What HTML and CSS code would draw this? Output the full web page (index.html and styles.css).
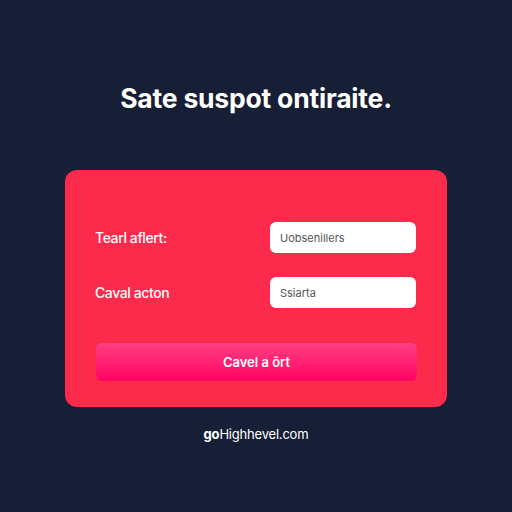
FILE: index.html
```html
<!DOCTYPE html>
<html lang="en">
<head>
    <meta charset="UTF-8">
    <meta name="viewport" content="width=device-width, initial-scale=1.0">
    <title>Sate suspot</title>
    <link rel="stylesheet" href="styles.css">
</head>
<body>
    <div class="page">
        <h1 class="title">Sate suspot ontiraite.</h1>

        <div class="card">
            <div class="row">
                <label for="alert-field">Tearl aflert:</label>
                <input type="text" id="alert-field" placeholder="Uobsenillers">
            </div>
            <div class="row">
                <label for="action-field">Caval acton</label>
                <input type="text" id="action-field" placeholder="Ssiarta">
            </div>
            <button class="submit">Cavel a ôrt</button>
        </div>

        <p class="footer"><b>go</b>Highhevel.com</p>
    </div>
</body>
</html>
```

FILE: styles.css
```css
body {
    margin: 0;
    padding: 0;
    background-color: #161f35;
    font-family: Inter, "Liberation Sans", sans-serif;
    color: #fff;
}
.page {
    width: 512px;
    height: 512px;
    display: flex;
    flex-direction: column;
    align-items: center;
}
.title {
    margin: 82px 0 0;
    font-size: 26.5px;
    font-weight: 700;
    letter-spacing: -0.2px;
    line-height: 32px;
}
.card {
    box-sizing: border-box;
    width: 382px;
    height: 237px;
    margin-top: 56px;
    padding: 52px 31px 25px 30px;
    background-color: #fd2b4b;
    border-radius: 12px;
    display: flex;
    flex-direction: column;
}
.row {
    display: flex;
    justify-content: space-between;
    align-items: center;
    height: 31px;
    margin-bottom: 24px;
}
.row label {
    font-size: 14px;
    font-weight: 500;
    letter-spacing: -0.4px;
}
.row input {
    box-sizing: border-box;
    width: 146px;
    height: 31px;
    padding: 0 10px;
    border: none;
    border-radius: 6px;
    background-color: #fff;
    font-family: inherit;
    font-size: 11px;
}
.row input::placeholder {
    color: #555;
}
.submit {
    margin-top: 11px;
    height: 38px;
    width: 100%;
    margin-left: 1px;
    border: none;
    border-radius: 6px;
    background: linear-gradient(#ff3e82, #ff0463);
    color: #fff;
    font-family: inherit;
    font-size: 13px;
    font-weight: 600;
}
.footer {
    margin: 19px 0 0;
    font-size: 13px;
    letter-spacing: -0.2px;
}
.footer b {
    font-weight: 700;
}
```
